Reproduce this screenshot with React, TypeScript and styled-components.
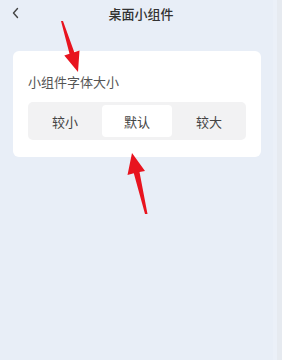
import React, { FC, useState } from "react";
import styled, { createGlobalStyle } from "styled-components";

const options = ["较小", "默认", "较大"];

const App: FC = () => {
  const [size, setSize] = useState(1);

  return (
    <Page>
      <GlobalStyle />
      <Header>
        <Back aria-label="back">
          <svg width="10" height="12" viewBox="0 0 10 12">
            <path
              d="M6.5 1.5 L2.5 6 L6.5 10.5"
              fill="none"
              stroke="#444"
              strokeWidth="1.4"
              strokeLinecap="round"
              strokeLinejoin="round"
            />
          </svg>
        </Back>
        <Title>{"桌面小组件"}</Title>
      </Header>

      <Card>
        <Label>{"小组件字体大小"}</Label>
        <Segments>
          {options.map((item, i) => (
            <Segment key={item} active={i === size} onClick={() => setSize(i)}>
              {item}
            </Segment>
          ))}
        </Segments>
      </Card>

      <Arrows width="282" height="360" viewBox="0 0 282 360">
        <polygon
          points="61,21 63,21 74.3,52.2 79.5,50.6 78,72 64.3,55.4 69.5,53.8"
          fill="#e8141f"
        />
        <polygon
          points="132,153 145,171 139.5,172 147.5,214 145,214 133.8,173.2 127.5,175"
          fill="#e8141f"
        />
      </Arrows>
    </Page>
  );
};

export default App;

const GlobalStyle = createGlobalStyle`
  html, body {
    margin: 0;
    padding: 0;
    background: #e8eef7;
  }
  body {
    font-family: "Noto Sans CJK SC", "Noto Sans", sans-serif;
  }
`;

const Page = styled.div`
  position: relative;
  width: 282px;
  height: 360px;
  overflow: hidden;
  background: linear-gradient(
    to right,
    #e8eef7 0,
    #e8eef7 273px,
    #ebf0f8 273px,
    #ebf0f8 277px,
    #e6eaf0 277px
  );
`;

const Header = styled.div`
  position: relative;
  height: 28px;
  display: flex;
  align-items: center;
  justify-content: center;
`;

const Back = styled.div`
  position: absolute;
  left: 11px;
  top: 7px;
  display: flex;
`;

const Title = styled.div`
  font-size: 13px;
  font-weight: 500;
  color: #333;
  margin-top: -2px;
`;

const Card = styled.div`
  margin: 23px 0 0 13px;
  width: 248px;
  height: 106px;
  box-sizing: border-box;
  background: #fff;
  border-radius: 6px;
  padding: 22px 15px 0 15px;
`;

const Label = styled.div`
  font-size: 13px;
  color: #555;
  line-height: 18px;
`;

const Segments = styled.div`
  margin-top: 11px;
  height: 38px;
  width: 218px;
  box-sizing: border-box;
  background: #f2f2f3;
  border-radius: 5px;
  padding: 3px 0;
  display: grid;
  grid-template-columns: 74px 70px 74px;
`;

const Segment = styled.div<{ active?: boolean }>`
  display: flex;
  align-items: center;
  justify-content: center;
  font-size: 13px;
  color: #444;
  border-radius: 4px;
  background: ${p => (p.active ? "#fff" : "transparent")};
  cursor: pointer;
`;

const Arrows = styled.svg`
  position: absolute;
  left: 0;
  top: 0;
  pointer-events: none;
`;
